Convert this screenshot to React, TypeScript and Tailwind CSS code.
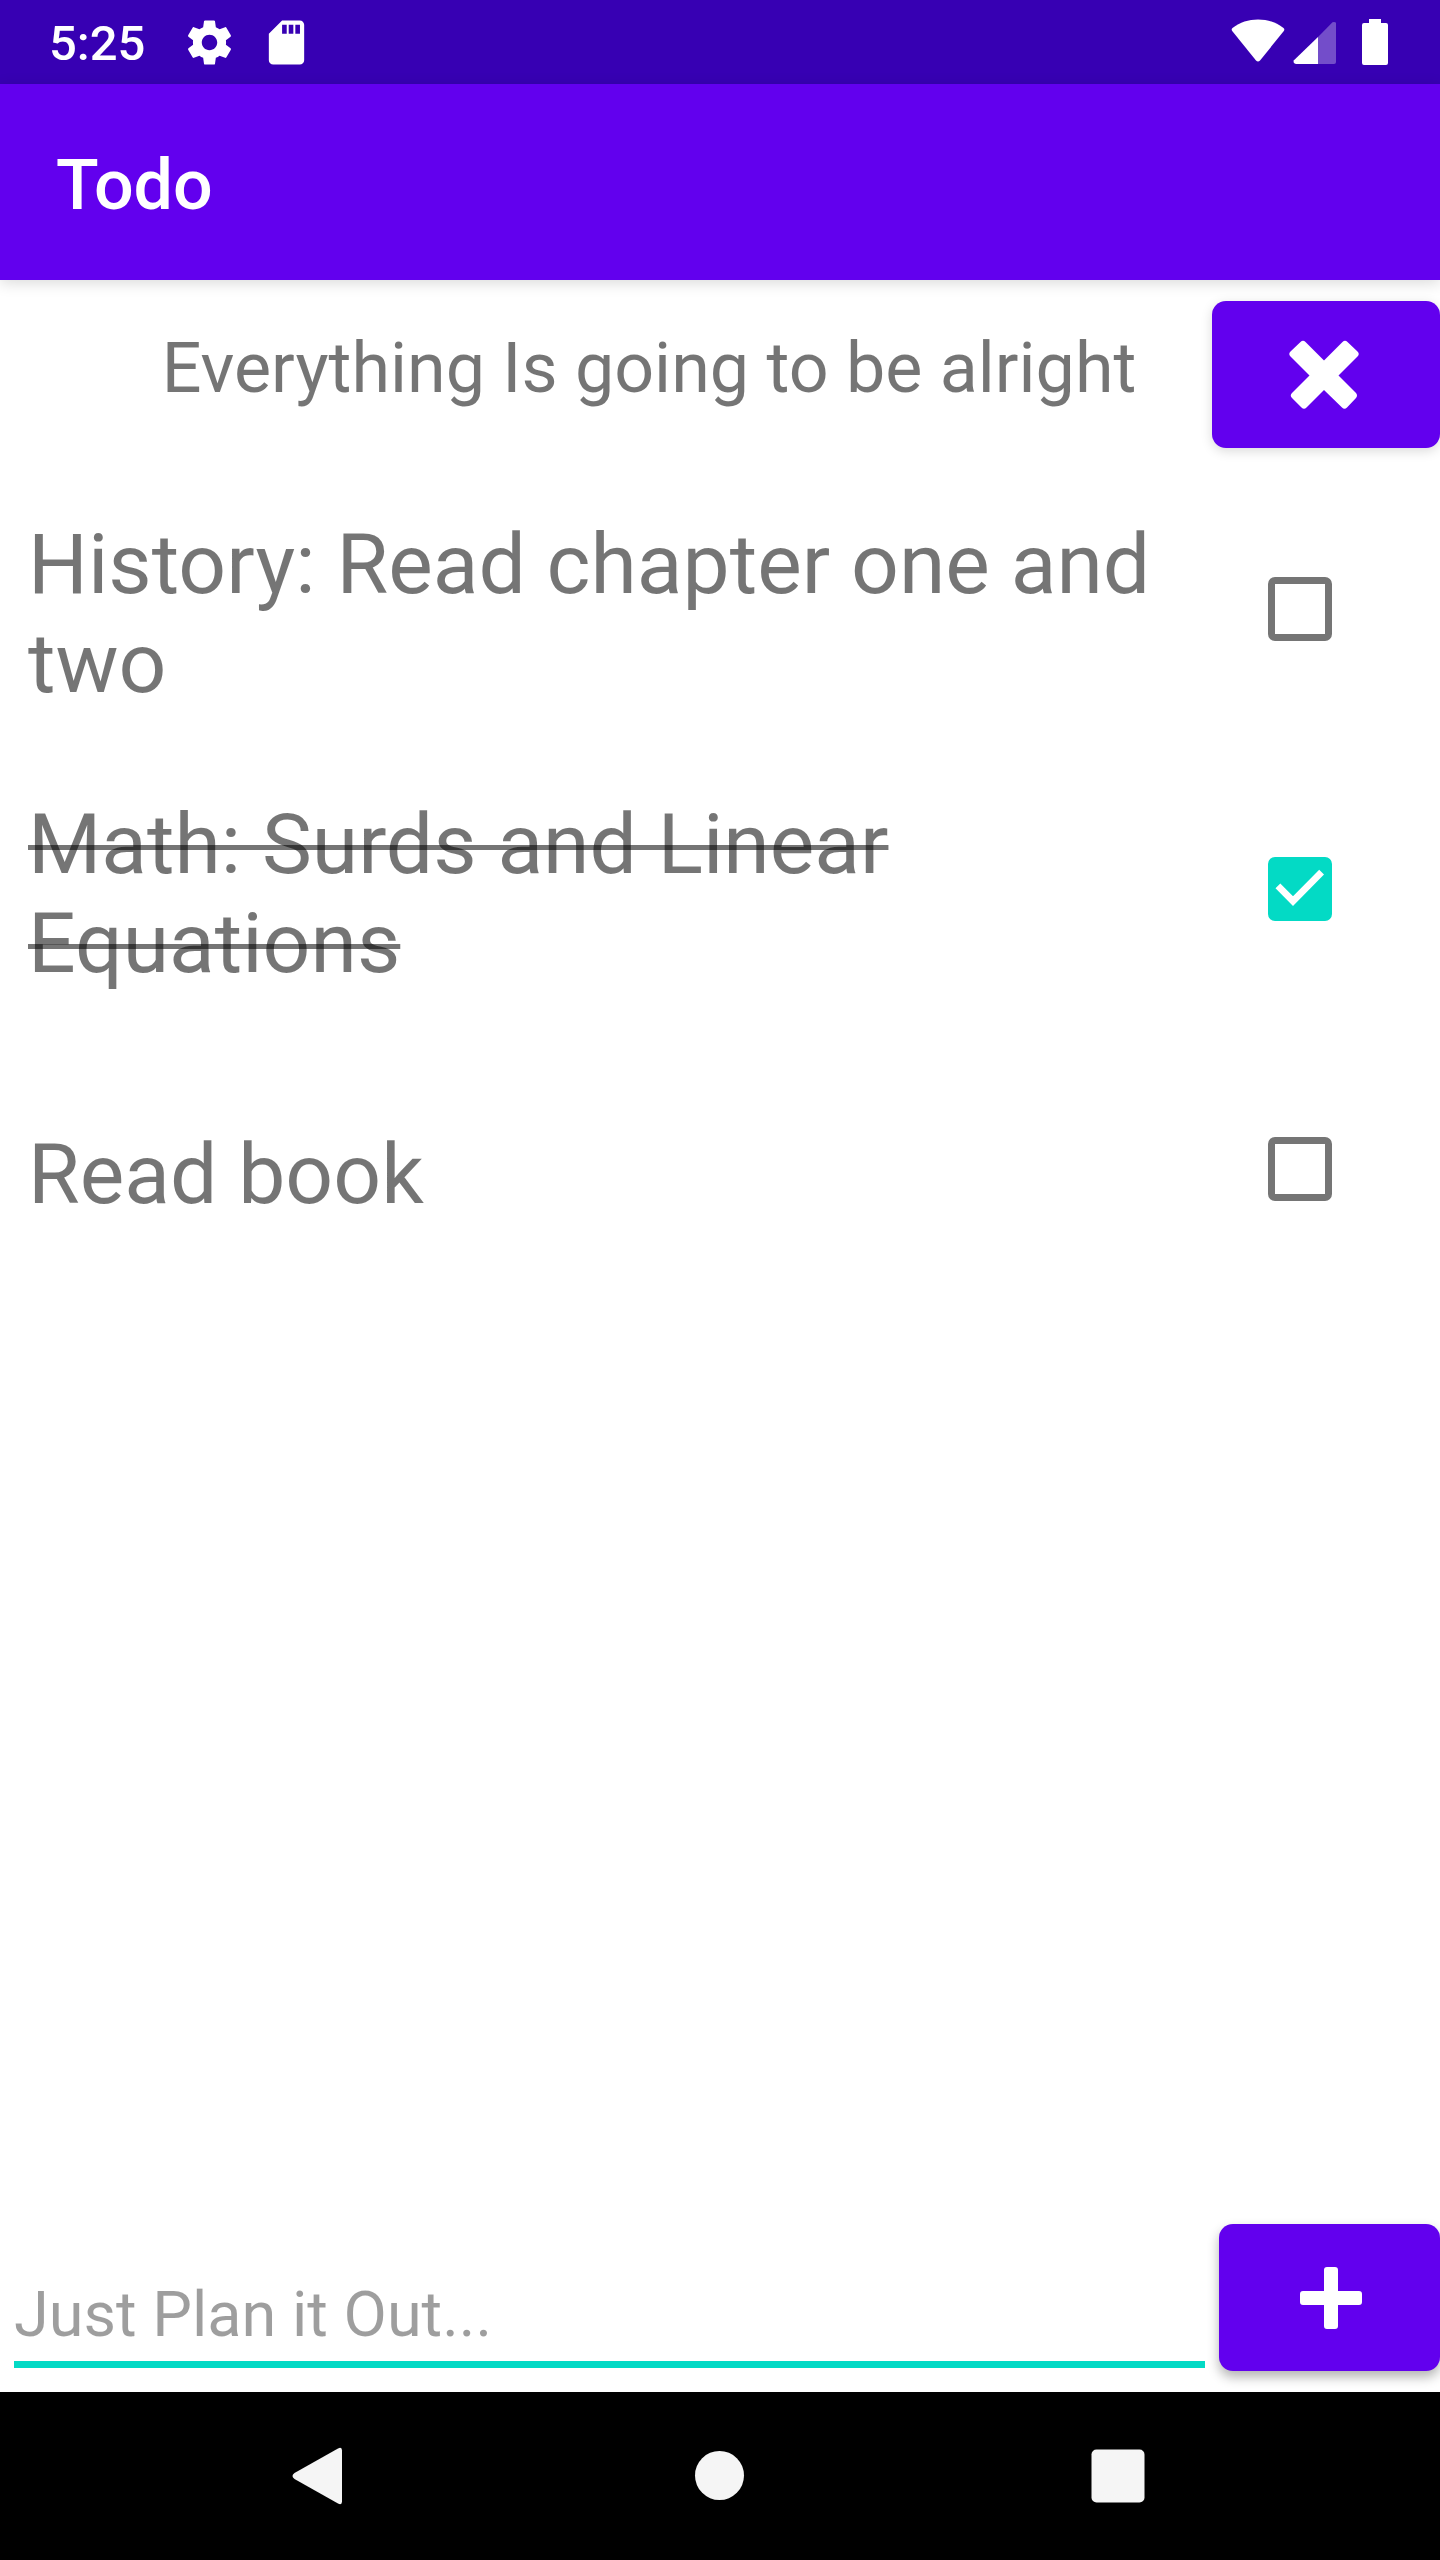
import { useState } from "react";

type Todo = { id: number; title: string; done: boolean };

const initialTodos: Todo[] = [
  { id: 1, title: "History: Read chapter one and two", done: false },
  { id: 2, title: "Math: Surds and Linear Equations", done: true },
  { id: 3, title: "Read book", done: false },
];

function StatusBar() {
  return (
    <div className="flex h-[84px] items-center justify-between bg-[#3700b3] pr-[52px] pl-[49px] text-white">
      <div className="flex items-center">
        <span className="pt-1 text-[49px] leading-[58px] font-medium">5:25</span>
        <svg className="ml-[38px] size-[53px]" viewBox="0 0 24 24" fill="currentColor" aria-hidden="true">
          <path d="M19.43 12.98c.04-.32.07-.64.07-.98s-.03-.66-.07-.98l2.11-1.65c.19-.15.24-.42.12-.64l-2-3.46c-.12-.22-.39-.3-.61-.22l-2.49 1c-.52-.4-1.08-.73-1.69-.98l-.38-2.65C14.46 2.18 14.25 2 14 2h-4c-.25 0-.46.18-.49.42l-.38 2.65c-.61.25-1.17.59-1.69.98l-2.49-1c-.23-.09-.49 0-.61.22l-2 3.46c-.13.22-.07.49.12.64l2.11 1.65c-.04.32-.07.65-.07.98s.03.66.07.98l-2.11 1.65c-.19.15-.24.42-.12.64l2 3.46c.12.22.39.3.61.22l2.49-1c.52.4 1.08.73 1.69.98l.38 2.65c.03.24.24.42.49.42h4c.25 0 .46-.18.49-.42l.38-2.65c.61-.25 1.17-.59 1.69-.98l2.49 1c.23.09.49 0 .61-.22l2-3.46c.12-.22.07-.49-.12-.64l-2.11-1.65zM12 15.5c-1.93 0-3.5-1.57-3.5-3.5s1.57-3.5 3.5-3.5 3.5 1.57 3.5 3.5-1.57 3.5-3.5 3.5z" />
        </svg>
        <svg className="ml-6 size-[53px]" viewBox="0 0 24 24" fill="currentColor" aria-hidden="true">
          <path d="M18 2h-8L4 8v12c0 1.100.9 2 2 2h12c1.100 0 2-.9 2-2V4c0-1.100-.9-2-2-2zM12.100 8h-2.100V4h2.100v4zm3 0h-2.100V4h2.100v4zm3 0h-2.100V4h2.100v4z" />
        </svg>
      </div>
      <div className="flex items-center gap-2">
        <svg className="h-[46px] w-[54px]" viewBox="0 0 54 46" fill="currentColor" aria-hidden="true">
          <path d="M1.500 9C9 3.200 17.500.5 27 .5S45 3.200 52.500 9q1.500 1.300.3 3L29 41.500q-2 2-4 0L1.200 12q-1.200-1.700.3-3z" />
        </svg>
        <svg className="h-[46px] w-[43px]" viewBox="0 0 43 46" fill="currentColor" aria-hidden="true">
          <path d="M25 18v27H3q-3-.5-2.300-3.500z" />
          <path d="M25 18L39.500 3.300q2-1 3.500.5V43q0 2-2 2H25z" fillOpacity=".3" />
        </svg>
        <svg className="ml-[18px] h-[46px] w-[26px]" viewBox="0 0 26 46" fill="currentColor" aria-hidden="true">
          <path d="M7 0h12v4h5q2 0 2 2v38q0 2-2 2H2q-2 0-2-2V6q0-2 2-2h5z" />
        </svg>
      </div>
    </div>
  );
}

function TodoRow({ todo, onToggle }: { todo: Todo; onToggle: () => void }) {
  const id = `todo-${todo.id}`;
  return (
    <li className="flex h-[280px] items-center pl-7">
      <label
        htmlFor={id}
        className={
          todo.done
            ? "flex-1 pt-2.5 text-[84px] leading-[99px] text-black/54 line-through decoration-[5px]"
            : "flex-1 pt-2.5 text-[84px] leading-[99px] text-black/54"
        }
      >
        {todo.title}
      </label>
      <span className="relative mr-[108px] ml-[60px] size-16">
        <input
          id={id}
          type="checkbox"
          checked={todo.done}
          onChange={onToggle}
          className="block size-16 appearance-none rounded-[7px] border-[7px] border-[#757575] checked:border-[#03dac5] checked:bg-[#03dac5]"
        />
        {todo.done && (
          <svg className="pointer-events-none absolute inset-0 size-16" viewBox="0 0 64 64" aria-hidden="true">
            <path d="M7.500 31.200L25 49 56 17.500 51.200 12.700 25 39.200 12.300 26.500z" fill="#fff" />
          </svg>
        )}
      </span>
    </li>
  );
}

export default function App() {
  const [todos, setTodos] = useState(initialTodos);
  const [draft, setDraft] = useState("");

  const toggle = (id: number) =>
    setTodos(todos.map((t) => (t.id === id ? { ...t, done: !t.done } : t)));
  const clearDone = () => setTodos(todos.filter((t) => !t.done));
  const add = () => {
    if (!draft.trim()) return;
    setTodos([...todos, { id: Date.now(), title: draft.trim(), done: false }]);
    setDraft("");
  };

  return (
    <div className="flex min-h-screen flex-col bg-white font-[Roboto,sans-serif]">
      <StatusBar />
      <header className="flex h-[196px] items-center bg-[#6200ee] px-14 pt-1.5 text-white shadow-[0_3px_14px_rgba(0,0,0,0.15)]">
        <h1 className="text-[70px] leading-[82px] font-medium">Todo</h1>
      </header>

      <main className="flex flex-1 flex-col">
        <div className="flex pt-[21px]">
          <p className="flex-1 pt-[26px] pl-[86px] text-center text-[70px] leading-[82px] text-black/54">
            Everything Is going to be alright
          </p>
          <button
            type="button"
            aria-label="Clear completed"
            onClick={clearDone}
            className="flex h-[147px] w-[228px] items-center justify-center rounded-[14px] bg-[#6200ee] shadow-[0_3px_12px_rgba(0,0,0,0.15)]"
          >
            <svg className="mr-1 size-[70px]" viewBox="0 0 70 70" fill="#fff" aria-hidden="true">
              <path d="M35 20.500L53.500 2q2.500-2.500 5 0L68.500 11.500q2.500 2.500 0 5L49.500 35.500 67 53q2 2.500 0 5L58 67.500q-2.500 2.500-5 0L35 50 17.500 67.500q-2.500 2.500-5 0L3 58q-2.500-2.500 0-5L20.500 35.500 1.500 16.500q-2.500-2.500 0-5L11.500 2q2.500-2.500 5 0z" />
            </svg>
          </button>
        </div>

        <ul className="mt-[21px] flex-1">
          {todos.map((todo) => (
            <TodoRow key={todo.id} todo={todo} onToggle={() => toggle(todo.id)} />
          ))}
        </ul>

        <form
          className="flex items-end pb-[21px] pl-3.5"
          onSubmit={(e) => {
            e.preventDefault();
            add();
          }}
        >
          <input
            type="text"
            aria-label="New todo"
            placeholder="Just Plan it Out..."
            value={draft}
            onChange={(e) => setDraft(e.target.value)}
            className="mr-3.5 mb-[3px] h-[101px] min-w-0 flex-1 border-b-[7px] border-[#03dac5] text-[63px] leading-[74px] text-black/87 outline-none placeholder:text-black/38"
          />
          <button
            type="submit"
            aria-label="Add todo"
            className="flex h-[147px] w-[221px] items-center justify-center rounded-[14px] bg-[#6200ee] shadow-[0_6px_12px_rgba(0,0,0,0.3)]"
          >
            <svg className="ml-0.5 size-[62px]" viewBox="0 0 62 62" fill="#fff" aria-hidden="true">
              <path d="M27 0h8q3 0 3 3v21h21q3 0 3 3v8q0 3-3 3H38v21q0 3-3 3h-8q-3 0-3-3V38H3q-3 0-3-3v-8q0-3 3-3h21V3q0-3 3-3z" />
            </svg>
          </button>
        </form>
      </main>

      <nav className="flex h-[168px] items-center bg-black px-[120px] text-[#f5f5f5]">
        <button type="button" aria-label="Back" className="flex flex-1 justify-center">
          <svg className="size-[60px]" viewBox="0 0 60 60" fill="currentColor" aria-hidden="true">
            <path d="M4.500 27L48 2.500q4-2 4 2v51q0 4-4 2L4.500 33q-4-3 0-6z" />
          </svg>
        </button>
        <button type="button" aria-label="Home" className="flex flex-1 justify-center">
          <svg className="size-[60px]" viewBox="0 0 60 60" fill="currentColor" aria-hidden="true">
            <circle cx="29.500" cy="29.500" r="24.500" />
          </svg>
        </button>
        <button type="button" aria-label="Recent apps" className="flex flex-1 justify-center">
          <svg className="size-[60px]" viewBox="0 0 60 60" fill="currentColor" aria-hidden="true">
            <rect x="1.500" y="3.500" width="53" height="53" rx="5" />
          </svg>
        </button>
      </nav>
    </div>
  );
}
